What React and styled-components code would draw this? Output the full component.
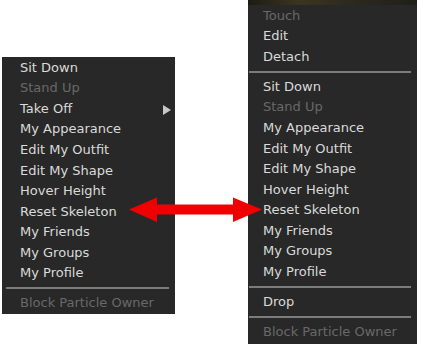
import React from 'react';
import styled, { createGlobalStyle } from 'styled-components';

const GlobalStyle = createGlobalStyle`
  html, body {
    margin: 0;
    padding: 0;
    background: #fff;
  }
`;

const Page = styled.div`
  position: relative;
  display: flex;
  align-items: flex-start;
  gap: 73px;
  padding-left: 2px;
  width: 423px;
  height: 350px;
  box-sizing: border-box;
  font-family: "DejaVu Sans", "Liberation Sans", sans-serif;
`;

const Menu = styled.div`
  display: flex;
  flex-direction: column;
  width: ${(p) => p.width}px;
  margin-top: ${(p) => p.top}px;
  padding-bottom: ${(p) => p.bottom}px;
  background: #282828;
  box-sizing: border-box;
`;

const TopStrip = styled.div`
  height: 5px;
  background: linear-gradient(90deg, #1d1b14 0%, #3b3420 30%, #2d2a1e 60%, #1f1f1a 100%);
`;

const Item = styled.div`
  display: flex;
  align-items: center;
  justify-content: space-between;
  height: 20.55px;
  padding-left: ${(p) => p.indent}px;
  padding-right: 4px;
  font-size: 13px;
  color: ${(p) => (p.disabled ? '#686868' : '#dadada')};
  white-space: nowrap;
`;

const Separator = styled.div`
  height: 2px;
  margin: 4px 6px 3.5px ${(p) => p.inset}px;
  background: #7c7c7c;
`;

const SubArrow = styled.span`
  width: 0;
  height: 0;
  margin-top: 3px;
  border-top: 5px solid transparent;
  border-bottom: 5px solid transparent;
  border-left: 8px solid #c8c8c8;
`;

const ArrowSvg = styled.svg`
  position: absolute;
  left: 129px;
  top: 197px;
`;

const Avatar = [
  { label: 'Sit Down' },
  { label: 'Stand Up', disabled: true },
];

const Rest = [
  { label: 'My Appearance' },
  { label: 'Edit My Outfit' },
  { label: 'Edit My Shape' },
  { label: 'Hover Height' },
  { label: 'Reset Skeleton' },
  { label: 'My Friends' },
  { label: 'My Groups' },
  { label: 'My Profile' },
];

const renderItems = (items, indent) => items.map((it) => (
  <Item key={it.label} indent={indent} disabled={it.disabled}>
    {it.label}
    {it.sub && <SubArrow />}
  </Item>
));

const DoubleArrow = () => (
  <ArrowSvg width="134" height="26" viewBox="0 0 134 26">
    <polygon
      points="0,12.5 28,0.5 28,7.5 104,7.5 104,0.5 133,12.5 104,25 104,17.5 28,17.5 28,25"
      fill="#f00000"
    />
  </ArrowSvg>
);

export default function App() {
  return (
    <>
      <GlobalStyle />
      <Page>
        <Menu width={173} top={57} bottom={0.5}>
          {renderItems(Avatar, 18)}
          {renderItems([{ label: 'Take Off', sub: true }], 18)}
          {renderItems(Rest, 18)}
          <Separator inset={4} />
          {renderItems([{ label: 'Block Particle Owner', disabled: true }], 18)}
        </Menu>
        <Menu width={169} top={0} bottom={2.5}>
          <TopStrip />
          {renderItems([
            { label: 'Touch', disabled: true },
            { label: 'Edit' },
            { label: 'Detach' },
          ], 15)}
          <Separator inset={1} />
          {renderItems(Avatar, 15)}
          {renderItems(Rest, 15)}
          <Separator inset={1} />
          {renderItems([{ label: 'Drop' }], 15)}
          <Separator inset={1} />
          {renderItems([{ label: 'Block Particle Owner', disabled: true }], 15)}
        </Menu>
        <DoubleArrow />
      </Page>
    </>
  );
}
